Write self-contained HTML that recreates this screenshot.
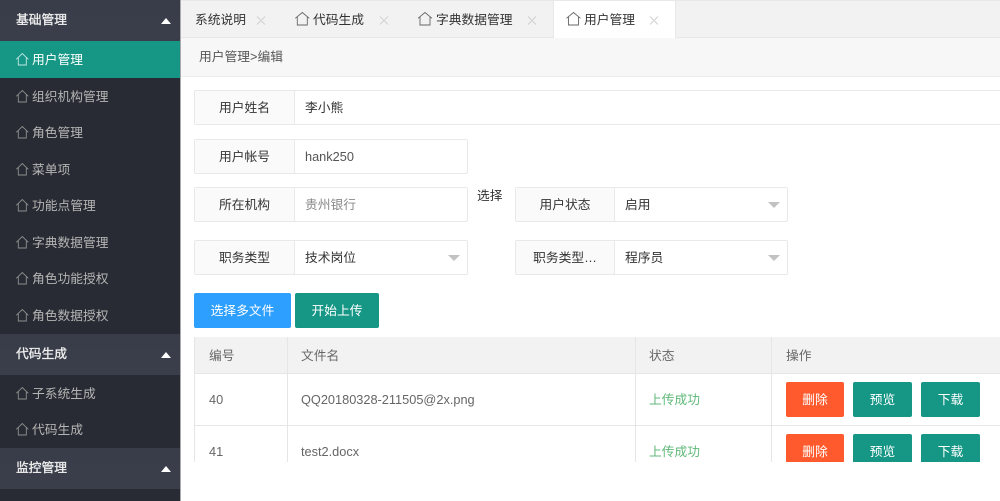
<!DOCTYPE html>
<html><head><meta charset="utf-8"><style>
*{box-sizing:border-box}
html,body{margin:0;padding:0;width:1000px;height:501px;overflow:hidden;background:#fff;font-family:"Liberation Sans","Noto Sans CJK SC",sans-serif;font-size:12.75px;color:#333}
.a{position:absolute;white-space:nowrap}
.side{left:0;top:0;width:180px;height:501px;background:#282b33}
.h{left:0;width:180px;height:41px;background:linear-gradient(#393d49,#3a3e4a);color:#eee;line-height:40px;padding-left:16px;-webkit-text-stroke:.35px #eee}
.h i{position:absolute;left:161px;top:18px;width:0;height:0;border:5px solid transparent;border-top:0;border-bottom:6px solid #fff}
.m{left:0;width:180px;height:37px;line-height:37px;padding-left:32px;color:#b5b5b5}
.m.on{background:#169786;color:#fff}
svg.ic{position:absolute;fill:none}
.tabs{left:181px;top:0;width:819px;height:38px;background:#f2f2f2;border-top:1px solid #e8e8e8;border-bottom:1px solid #e8e8e8}
.t{top:0;height:38px;line-height:40px;color:#333}
.bc{left:181px;top:38px;width:819px;height:39px;background:#f7f7f7;border-bottom:1px solid #eee;line-height:37px;padding-left:18px;color:#555}
.box{height:35px;border:1px solid #e9e9e9;border-radius:2px;background:#fff}
.lb{position:absolute;left:0;top:0;bottom:0;width:100px;background:#fafafa;border-right:1px solid #e9e9e9;text-align:center;line-height:34px;color:#333}
.v{position:absolute;left:110px;top:0;line-height:34px;color:#333}
.r .lb{width:99px}
.r .v{left:109px}
.ar{position:absolute;right:7px;top:14px;width:0;height:0;border:6px solid transparent;border-bottom:0;border-top:6px solid #c2c2c2}
.btn{color:#fff;text-align:center;border-radius:2px}
.th{background:#f2f2f2}
.tx{color:#666}
.ln{background:#e6e6e6}
</style></head><body>
<div class="a side"></div>
<div class="a" style="left:180px;top:0;width:1px;height:501px;background:#a9a9ae"></div>

<div class="a h" style="top:0">基础管理<i></i></div>
<div class="a m on" style="top:41px">用户管理</div>
<div class="a m" style="top:78px">组织机构管理</div>
<div class="a m" style="top:114px">角色管理</div>
<div class="a m" style="top:151px">菜单项</div>
<div class="a m" style="top:187px">功能点管理</div>
<div class="a m" style="top:224px">字典数据管理</div>
<div class="a m" style="top:260px">角色功能授权</div>
<div class="a m" style="top:297px">角色数据授权</div>
<div class="a h" style="top:334px">代码生成<i></i></div>
<div class="a m" style="top:375px">子系统生成</div>
<div class="a m" style="top:411px">代码生成</div>
<div class="a h" style="top:448px">监控管理<i></i></div>

<svg class="ic" style="left:0;top:0" width="180" height="501" stroke-width=".9">
<defs><path id="h" d="M.3 6.3L6.3.5L12.3 6.3M2.3 4.8V12H10.3V4.8"/></defs>
<use href="#h" x="16" y="53" stroke="#bfe8e1"/>
<use href="#h" x="16" y="90" stroke="#8f8f8f"/>
<use href="#h" x="16" y="126" stroke="#8f8f8f"/>
<use href="#h" x="16" y="163" stroke="#8f8f8f"/>
<use href="#h" x="16" y="199" stroke="#8f8f8f"/>
<use href="#h" x="16" y="236" stroke="#8f8f8f"/>
<use href="#h" x="16" y="272" stroke="#8f8f8f"/>
<use href="#h" x="16" y="309" stroke="#8f8f8f"/>
<use href="#h" x="16" y="387" stroke="#8f8f8f"/>
<use href="#h" x="16" y="423" stroke="#8f8f8f"/>
</svg>

<div class="a tabs"></div>
<div class="a" style="left:553px;top:1px;width:123px;height:38px;background:#fff;border-left:1px solid #e8e8e8;border-right:1px solid #e8e8e8"></div>
<div class="a t" style="left:195px">系统说明</div>
<div class="a t" style="left:313px">代码生成</div>
<div class="a t" style="left:436px">字典数据管理</div>
<div class="a t" style="left:584px">用户管理</div>
<svg class="ic" style="left:0;top:0" width="700" height="40" stroke="#666" stroke-width=".9">
<path d="M295.3 18.3L302.3 12.5L309.3 18.3M297.3 16.8V25H307.3V16.8"/>
<path d="M418 18.3L425 12.5L432 18.3M420 16.8V25H430V16.8"/>
<path d="M566.5 18.3L573.5 12.5L580.5 18.3M568.5 16.8V25H578.5V16.8"/>
<path stroke="#cfcfcf" d="M257 16.5L265 24.5M265 16.5L257 24.5M380 16.5L388 24.5M388 16.5L380 24.5M528 16.5L536 24.5M536 16.5L528 24.5M650 16.5L658 24.5M658 16.5L650 24.5"/>
</svg>

<div class="a bc">用户管理&gt;编辑</div>

<div class="a box" style="left:194px;top:90px;width:820px"><div class="lb">用户姓名</div><div class="v">李小熊</div></div>
<div class="a box" style="left:194px;top:139px;width:274px"><div class="lb">用户帐号</div><div class="v" style="color:#555">hank250</div></div>
<div class="a box" style="left:194px;top:187px;width:274px"><div class="lb">所在机构</div><div class="v" style="color:#888">贵州银行</div></div>
<div class="a" style="left:477px;top:187px;line-height:18px">选择</div>
<div class="a box r" style="left:515px;top:187px;width:273px"><div class="lb">用户状态</div><div class="v">启用</div><div class="ar"></div></div>
<div class="a box" style="left:194px;top:240px;width:274px"><div class="lb">职务类型</div><div class="v">技术岗位</div><div class="ar"></div></div>
<div class="a box r" style="left:515px;top:240px;width:273px"><div class="lb">职务类型…</div><div class="v">程序员</div><div class="ar"></div></div>

<div class="a btn" style="left:194px;top:293px;width:97px;height:35px;line-height:35px;background:#2d9fff">选择多文件</div>
<div class="a btn" style="left:295px;top:293px;width:84px;height:35px;line-height:35px;background:#169786">开始上传</div>

<div class="a th" style="left:194px;top:337px;width:806px;height:37px"></div>
<div class="a ln" style="left:194px;top:337px;width:1px;height:125px"></div>
<div class="a ln" style="left:287px;top:337px;width:1px;height:125px"></div>
<div class="a ln" style="left:635px;top:337px;width:1px;height:125px"></div>
<div class="a ln" style="left:771px;top:337px;width:1px;height:125px"></div>
<div class="a ln" style="left:194px;top:373px;width:806px;height:1px"></div>
<div class="a ln" style="left:194px;top:425px;width:806px;height:1px"></div>

<div class="a tx" style="left:209px;top:348px;line-height:16px">编号</div>
<div class="a tx" style="left:301px;top:348px;line-height:16px">文件名</div>
<div class="a tx" style="left:649px;top:348px;line-height:16px">状态</div>
<div class="a tx" style="left:786px;top:348px;line-height:16px">操作</div>

<div class="a tx" style="left:209px;top:392px;line-height:16px">40</div>
<div class="a tx" style="left:301px;top:392px;line-height:16px">QQ20180328-211505@2x.png</div>
<div class="a" style="left:649px;top:392px;line-height:16px;color:#5fb878">上传成功</div>
<div class="a btn" style="left:786px;top:382px;width:58px;height:35px;line-height:35px;background:#ff5a2d">删除</div>
<div class="a btn" style="left:853px;top:382px;width:59px;height:35px;line-height:35px;background:#169786">预览</div>
<div class="a btn" style="left:921px;top:382px;width:59px;height:35px;line-height:35px;background:#169786">下载</div>

<div class="a tx" style="left:209px;top:444px;line-height:16px">41</div>
<div class="a tx" style="left:301px;top:444px;line-height:16px">test2.docx</div>
<div class="a" style="left:649px;top:444px;line-height:16px;color:#5fb878">上传成功</div>
<div class="a btn" style="left:786px;top:434px;width:58px;height:35px;line-height:35px;background:#ff5a2d">删除</div>
<div class="a btn" style="left:853px;top:434px;width:59px;height:35px;line-height:35px;background:#169786">预览</div>
<div class="a btn" style="left:921px;top:434px;width:59px;height:35px;line-height:35px;background:#169786">下载</div>
<div class="a" style="left:181px;top:462px;width:819px;height:39px;background:#fff"></div>
</body></html>
